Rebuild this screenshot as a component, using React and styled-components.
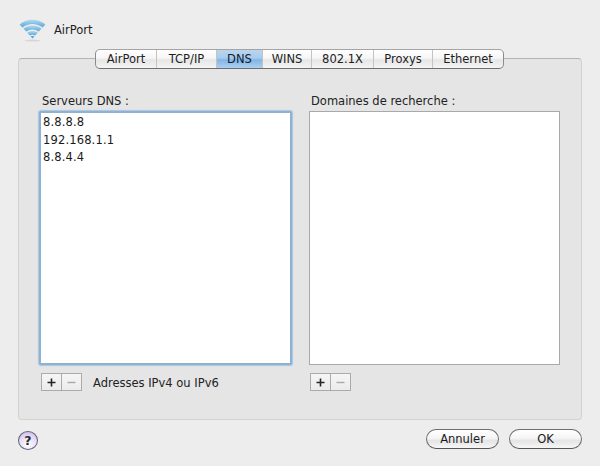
import React from "react";
import styled, { createGlobalStyle } from "styled-components";

const Global = createGlobalStyle`
  html, body { margin: 0; padding: 0; background: #ededed; }
  body { font-family: "DejaVu Sans", Verdana, sans-serif; color: #1c1c1c; }
`;

const Window = styled.div`
  width: 600px;
  height: 466px;
  box-sizing: border-box;
  padding: 18px 18px 0 18px;
  overflow: hidden;
  background: #ededed;
`;

const Header = styled.div`
  display: flex;
  align-items: center;
  gap: 8px;
  height: 26px;
  padding-left: 1px;
  margin-bottom: 14px;
`;

const HeaderTitle = styled.span`
  font-size: 11.5px;
  color: #222;
  margin-top: -2px;
`;

const Panel = styled.div`
  box-sizing: border-box;
  width: 564px;
  height: 362px;
  background: #e5e5e5;
  border: 1px solid #d2d2d2;
  border-top-color: #b4b4b4;
  border-radius: 4px;
  padding: 0 21px 0 20px;
`;

const Tabs = styled.div`
  display: flex;
  width: 409px;
  height: 20px;
  margin: -10px 0 0 56px;
  box-sizing: border-box;
  border: 1px solid #8b8b8b;
  border-top-color: #a5a5a5;
  border-bottom-color: #6f6f6f;
  border-radius: 5px;
  overflow: hidden;
  background: linear-gradient(#ffffff 0%, #f6f6f6 45%, #e6e6e6 55%, #f4f4f4 100%);
`;

const Tab = styled.div`
  width: ${(p) => p.$w}px;
  box-sizing: border-box;
  display: flex;
  align-items: center;
  justify-content: center;
  padding-bottom: 1px;
  font-size: 11.5px;
  color: #1e1e1e;
  border-right: 1px solid #c4c4c4;
  &:last-child { border-right: 0; }
  ${(p) => p.$active && `
    background: linear-gradient(#b9d5ef 0%, #a9cbec 45%, #82b4e6 55%, #abd1f3 100%);
    color: #10202f;
  `}
`;

const Columns = styled.div`
  display: grid;
  grid-template-columns: 253px 251px;
  column-gap: 17px;
  margin-top: 25px;
`;

const Column = styled.div`
  display: flex;
  flex-direction: column;
`;

const Label = styled.div`
  font-size: 11.5px;
  line-height: 14px;
  height: 14px;
  padding-left: ${(p) => p.$inset}px;
  margin-bottom: 3px;
  color: #222;
`;

const List = styled.div`
  box-sizing: border-box;
  height: 254px;
  background: #fff;
  padding: 1px 2px;
  font-size: 11.5px;
  line-height: 17.5px;
  letter-spacing: 0.15px;
  color: #1a1a1a;
  border: 1px solid #a9a9a9;
  ${(p) => p.$focused && `
    border: 2px solid #8fb2d3;
    border-radius: 2px;
    box-shadow: 0 0 1px 1px #a9c6e0;
  `}
`;

const Controls = styled.div`
  display: flex;
  align-items: center;
  margin: 8px 0 0 ${(p) => p.$inset}px;
  height: 18px;
`;

const PlusMinus = styled.div`
  display: flex;
  box-sizing: border-box;
  width: 41px;
  height: 18px;
  border: 1px solid #ababab;
  background: linear-gradient(#f5f5f5, #ececec);
`;

const Segment = styled.div`
  flex: 1;
  display: flex;
  align-items: center;
  justify-content: center;
  & + & { border-left: 1px solid #ababab; }
`;

const Hint = styled.span`
  margin-left: 11px;
  padding-top: 1px;
  font-size: 11.5px;
  color: #222;
`;

const Footer = styled.div`
  display: flex;
  align-items: flex-start;
  justify-content: space-between;
  margin-top: 9px;
`;

const Help = styled.div`
  box-sizing: border-box;
  width: 20px;
  height: 19px;
  margin-top: 2px;
  border-radius: 50%;
  border: 1px solid #62627e;
  background: radial-gradient(circle at 50% 75%, #ffffff 0%, #e6dcf6 55%, #bdaee0 100%);
  display: flex;
  align-items: center;
  justify-content: center;
  font-size: 12.5px;
  font-weight: 700;
  color: #2a2a33;
`;

const Buttons = styled.div`
  display: flex;
  gap: 10px;
`;

const Button = styled.div`
  box-sizing: border-box;
  width: 73px;
  height: 20px;
  border-radius: 10px;
  border: 1px solid #6d6d6d;
  border-bottom-color: #555;
  background: linear-gradient(#ffffff 0%, #f5f5f5 45%, #e4e4e4 60%, #f6f6f6 100%);
  display: flex;
  align-items: center;
  justify-content: center;
  padding-bottom: 1px;
  font-size: 11.5px;
  color: #1a1a1a;
`;

const WifiIcon = () => (
  <svg width="27" height="26" viewBox="0 0 27 26" fill="none">
    <defs>
      <linearGradient id="wifi" x1="0" y1="0" x2="0" y2="1">
        <stop offset="0" stopColor="#b2daf1" />
        <stop offset="1" stopColor="#58a6d8" />
      </linearGradient>
    </defs>
    <path d="M0.5 6.5 C7 0 20 0 26.5 6.5 L23.6 9.6 C17.5 4.8 9.5 4.8 3.4 9.6 Z" fill="url(#wifi)" />
    <path d="M4.4 10.6 C10 6.4 17 6.4 22.6 10.6 L19.8 13.6 C15.5 10.8 11.5 10.8 7.2 13.6 Z" fill="url(#wifi)" />
    <path d="M8.2 14.6 C11.5 12.6 15.5 12.6 18.8 14.6 L16.2 17.4 C14.5 16.6 12.5 16.6 10.8 17.4 Z" fill="url(#wifi)" />
    <path d="M11.6 18.4 C12.8 17.9 14.2 17.9 15.4 18.4 L13.5 20.6 Z" fill="#58a6d8" />
    <ellipse cx="13.5" cy="22.6" rx="8" ry="1" fill="#d6d6d6" />
  </svg>
);

const PlusIcon = () => (
  <svg width="9" height="9" viewBox="0 0 9 9">
    <path d="M4.5 0.5 V8.5 M0.5 4.5 H8.5" stroke="#262626" strokeWidth="1.6" />
  </svg>
);

const MinusIcon = () => (
  <svg width="9" height="9" viewBox="0 0 9 9">
    <path d="M0.5 4.5 H8.5" stroke="#a9a9a9" strokeWidth="1.4" />
  </svg>
);

const TABS = [
  ["AirPort", 61],
  ["TCP/IP", 60],
  ["DNS", 46, true],
  ["WINS", 49],
  ["802.1X", 62],
  ["Proxys", 59],
  ["Ethernet", 70],
];

const AddRemove = () => (
  <PlusMinus>
    <Segment><PlusIcon /></Segment>
    <Segment><MinusIcon /></Segment>
  </PlusMinus>
);

export default function App() {
  return (
    <Window>
      <Global />
      <Header>
        <WifiIcon />
        <HeaderTitle>AirPort</HeaderTitle>
      </Header>
      <Panel>
        <Tabs>
          {TABS.map(([name, w, active]) => (
            <Tab key={name} $w={w} $active={active}>{name}</Tab>
          ))}
        </Tabs>
        <Columns>
          <Column>
            <Label $inset={3}>Serveurs DNS :</Label>
            <List $focused>
              <div>8.8.8.8</div>
              <div>192.168.1.1</div>
              <div>8.8.4.4</div>
            </List>
            <Controls $inset={2}>
              <AddRemove />
              <Hint>Adresses IPv4 ou IPv6</Hint>
            </Controls>
          </Column>
          <Column>
            <Label $inset={2}>Domaines de recherche :</Label>
            <List />
            <Controls $inset={1}>
              <AddRemove />
            </Controls>
          </Column>
        </Columns>
      </Panel>
      <Footer>
        <Help>?</Help>
        <Buttons>
          <Button>Annuler</Button>
          <Button>OK</Button>
        </Buttons>
      </Footer>
    </Window>
  );
}
